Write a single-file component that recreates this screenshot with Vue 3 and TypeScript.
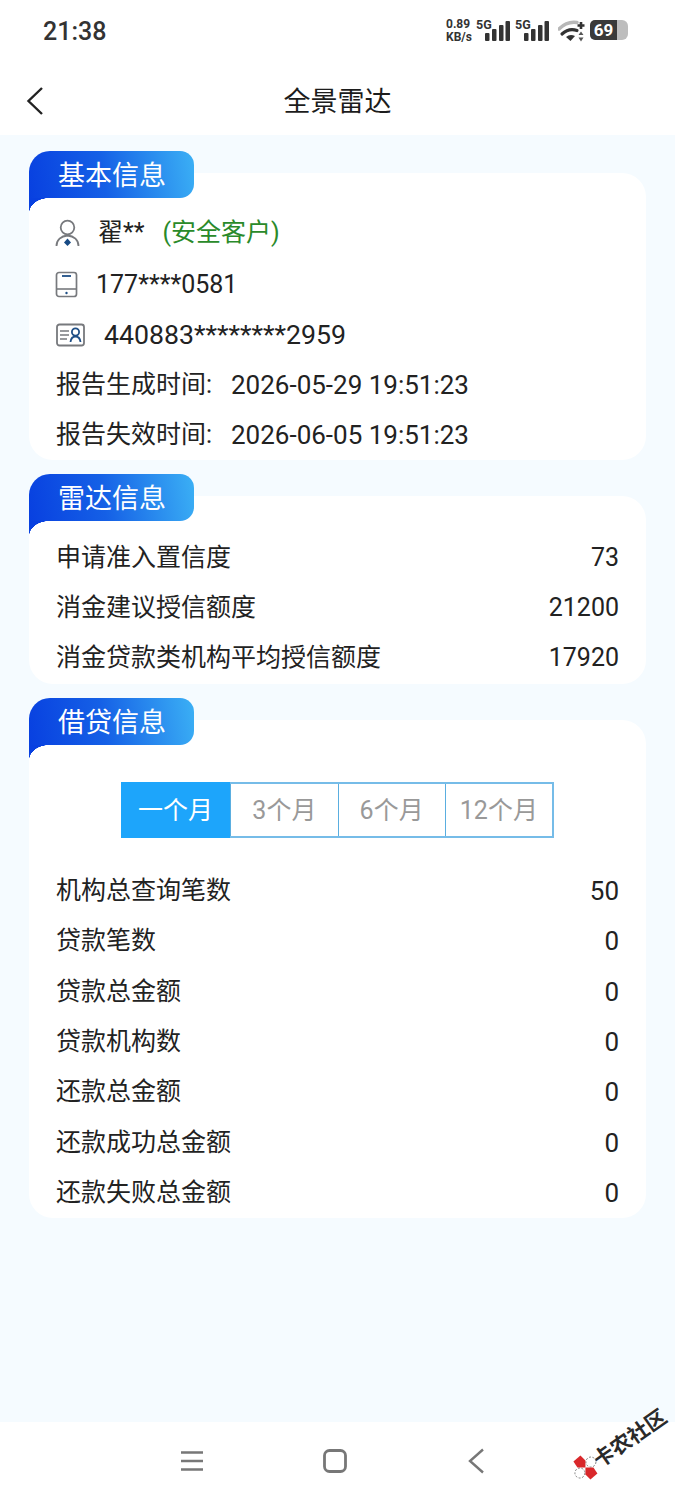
<script setup lang="ts">
import { ref } from "vue";

const radarRows = [
  { label: "申请准入置信度", value: "73" },
  { label: "消金建议授信额度", value: "21200" },
  { label: "消金贷款类机构平均授信额度", value: "17920" },
];

const loanRows = [
  { label: "机构总查询笔数", value: "50" },
  { label: "贷款笔数", value: "0" },
  { label: "贷款总金额", value: "0" },
  { label: "贷款机构数", value: "0" },
  { label: "还款总金额", value: "0" },
  { label: "还款成功总金额", value: "0" },
  { label: "还款失败总金额", value: "0" },
];

const tabs = ["一个月", "3个月", "6个月", "12个月"];
const activeTab = ref(0);
</script>

<template>
  <div class="page">
    <div class="top">
      <div class="status">
        <span class="time">21:38</span>
        <div class="status-icons">
          <span class="speed">0.89<br />KB/s</span>
          <div v-for="n in 2" :key="n" class="signal">
            <span class="five">5G</span>
            <svg width="25" height="20" viewBox="0 0 25 20">
              <rect x="0" y="12" width="4.500" height="8" rx="1" />
              <rect x="7" y="8" width="4.500" height="12" rx="1" />
              <rect x="14" y="4" width="4.500" height="16" rx="1" />
              <rect x="20.500" y="0" width="4.500" height="20" rx="1" />
            </svg>
          </div>
          <svg class="wifi" width="28" height="22" viewBox="0 0 28 22">
            <path d="M1 9 Q9 1 19 2.500" fill="none" stroke="#b8b8b8" stroke-width="3.400" stroke-linecap="round" />
            <path d="M4 14 Q11 7.500 19 10.500" fill="none" stroke="#333" stroke-width="3.200" stroke-linecap="round" />
            <path d="M8 17 Q12 13.500 17 16 L12.500 21 Z" fill="#333" />
            <path d="M23 2 V9 M19.500 5.500 H26.500" stroke="#333" stroke-width="2.600" fill="none" />
            <path d="M23 11.500 L25.500 15 H20.500 Z M23 21.500 L25.500 17.500 H20.500 Z" fill="#555" />
          </svg>
          <div class="battery">
            <span class="battery-fill">69</span>
            <i class="battery-cap"></i>
          </div>
        </div>
      </div>
      <div class="nav">
        <svg class="back" width="20" height="30" viewBox="0 0 20 30">
          <path d="M17 2 L3.500 15 L17 28" fill="none" stroke="#222" stroke-width="2.400" />
        </svg>
        <span class="title">全景雷达</span>
      </div>
    </div>

    <div class="content">
      <section class="card basic">
        <div class="tag">基本信息</div>
        <div class="row first">
          <svg class="ic ic-user" width="26" height="28" viewBox="0 0 26 28">
            <circle cx="12.500" cy="8.500" r="6.800" fill="none" stroke="#77797d" stroke-width="1.800" />
            <path d="M1.500 27 C1.500 21 6 17 12.500 16.500 C19 17 23.500 21 23.500 27" fill="none" stroke="#77797d" stroke-width="1.800" />
            <path d="M12.500 19.500 L16 23.500 L12.500 27 L9 23.500 Z" fill="#174a84" />
          </svg>
          <span class="name">翟**</span>
          <span class="safe">(安全客户)</span>
        </div>
        <div class="row">
          <svg class="ic ic-phone" width="23" height="27" viewBox="0 0 23 27">
            <rect x="1.500" y="1.500" width="20" height="24" rx="2.500" fill="none" stroke="#77797d" stroke-width="1.700" />
            <path d="M1.500 18 H21.500" stroke="#77797d" stroke-width="1.600" />
            <path d="M7 5 H16" stroke="#1f4f86" stroke-width="1.800" />
            <circle cx="11.500" cy="22" r="1.200" fill="#1f4f86" />
          </svg>
          <span class="phone">177****0581</span>
        </div>
        <div class="row">
          <svg class="ic ic-id" width="29" height="24" viewBox="0 0 29 24">
            <rect x="1" y="1.500" width="27" height="21" rx="2.500" fill="none" stroke="#77797d" stroke-width="1.800" />
            <path d="M4 8 H13 M4 12 H13 M4 16 H11" stroke="#77797d" stroke-width="1.600" />
            <circle cx="19.500" cy="9" r="3.600" fill="none" stroke="#1f4f86" stroke-width="1.800" />
            <path d="M14.500 19 C15 15 17 13.500 19.500 13.500 C22 13.500 24 15 24.500 19" fill="none" stroke="#1f4f86" stroke-width="1.800" />
          </svg>
          <span class="idno">440883********2959</span>
        </div>
        <div class="row"><span class="label">报告生成时间:</span><span class="date">2026-05-29 19:51:23</span></div>
        <div class="row"><span class="label">报告失效时间:</span><span class="date">2026-06-05 19:51:23</span></div>
      </section>

      <section class="card radar">
        <div class="tag">雷达信息</div>
        <div v-for="item in radarRows" :key="item.label" class="row between">
          <span>{{ item.label }}</span>
          <span>{{ item.value }}</span>
        </div>
      </section>

      <section class="card loan">
        <div class="tag">借贷信息</div>
        <div class="tabs">
          <div
            v-for="(tab, i) in tabs"
            :key="tab"
            class="tab"
            :class="{ active: i === activeTab }"
            @click="activeTab = i"
          >
            {{ tab }}
          </div>
        </div>
        <div v-for="item in loanRows" :key="item.label" class="row between">
          <span>{{ item.label }}</span>
          <span class="num">{{ item.value }}</span>
        </div>
      </section>
    </div>

    <div class="bottom">
      <svg class="b-menu" width="24" height="22" viewBox="0 0 24 22">
        <path d="M1 2.500 H23 M1 11 H23 M1 19.500 H23" stroke="#777" stroke-width="2.600" />
      </svg>
      <svg class="b-home" width="24" height="24" viewBox="0 0 24 24">
        <rect x="1.500" y="1.500" width="21" height="21" rx="5" fill="none" stroke="#777" stroke-width="2.800" />
      </svg>
      <svg class="b-back" width="16" height="26" viewBox="0 0 16 26">
        <path d="M15 1.500 L2 13 L15 24.500" fill="none" stroke="#777" stroke-width="2.400" />
      </svg>
      <div class="mark">
        <svg class="mark-logo" width="26" height="26" viewBox="0 0 26 26">
          <circle cx="18.500" cy="7.500" r="5" fill="#fff" stroke="#666" stroke-width="0.800" stroke-dasharray="2 1.500" />
          <circle cx="7.500" cy="18.500" r="5" fill="#fff" stroke="#666" stroke-width="0.800" stroke-dasharray="2 1.500" />
          <path d="M1 7 L8 1 L13 6 L13 13 L5 13 Z" fill="#d9282b" />
          <path d="M13 13 L21 13 L25 19 L18 25 L13 20 Z" fill="#d9282b" />
        </svg>
        <span>卡农社区</span>
      </div>
    </div>
  </div>
</template>

<style scoped>
.page {
  width: 675px;
  height: 1500px;
  display: flex;
  flex-direction: column;
  background: #f5fbff;
  color: #222;
  font-family: "Roboto", "Noto Sans CJK SC", sans-serif;
  font-size: 25px;
  overflow: hidden;
}

.top {
  height: 135px;
  background: #fff;
  flex: none;
}

.status {
  height: 62px;
  display: flex;
  align-items: center;
  justify-content: space-between;
  padding: 0 47px 0 43px;
}

.time {
  font-size: 25px;
  font-weight: 500;
  color: #333;
}

.status-icons {
  display: flex;
  align-items: flex-end;
  height: 22px;
  margin-top: -2px;
  color: #333;
}

.speed {
  font-size: 12px;
  line-height: 13px;
  font-weight: 700;
  width: 30px;
  margin-bottom: -3px;
  white-space: nowrap;
}

.signal {
  position: relative;
  width: 34px;
  height: 20px;
  margin-right: 5px;
  display: flex;
  justify-content: flex-end;
  fill: #333;
}

.five {
  position: absolute;
  left: 0;
  top: -2px;
  font-size: 12.500px;
  font-weight: 700;
  line-height: 12px;
}

.wifi {
  margin: 0 4px -1px 4px;
}

.battery {
  display: flex;
  align-items: center;
  width: 38px;
  height: 20px;
  margin-bottom: 1px;
}

.battery-fill {
  width: 27px;
  height: 20px;
  border-radius: 5px 0 0 5px;
  background: #3a3a3a;
  color: #fff;
  font-size: 17px;
  font-weight: 700;
  line-height: 20px;
  text-align: center;
}

.battery-cap {
  width: 11px;
  height: 20px;
  border-radius: 0 6px 6px 0;
  background: #bdbdbd;
}

.nav {
  position: relative;
  height: 73px;
  padding-top: 2px;
  box-sizing: border-box;
  display: flex;
  align-items: center;
  justify-content: center;
}

.back {
  position: absolute;
  left: 25px;
  top: 24px;
}

.title {
  font-size: 27px;
  color: #1c1c1c;
}

.content {
  flex: 1;
  padding: 38px 29px 0;
  display: flex;
  flex-direction: column;
  gap: 36px;
}

.card {
  position: relative;
  background: #fff;
  border-radius: 24px;
  padding: 35px 27px 0 27px;
}

.basic {
  padding-top: 36px;
  padding-bottom: 0;
}

.radar {
  padding-top: 36px;
  padding-bottom: 1px;
}

.tag {
  position: absolute;
  left: 0;
  top: -22px;
  width: 165px;
  height: 47px;
  box-sizing: border-box;
  padding: 4px 0 0 29px;
  border-radius: 21px 14px 14px 0;
  background: linear-gradient(80deg, #0840e0 0%, #1560e6 45%, #3bb0f5 100%);
  color: #fff;
  font-size: 27px;
  line-height: 43px;
}

.tag::after {
  content: "";
  position: absolute;
  left: 0;
  top: 47px;
  width: 20px;
  height: 15px;
  background: radial-gradient(ellipse 20px 15px at 100% 100%, transparent 98%, #0840e0 100%);
}

.row {
  height: 50.300px;
  display: flex;
  align-items: center;
  line-height: 30px;
  white-space: nowrap;
}

.row.first {
  margin: -1px 0 1px;
}

.between {
  justify-content: space-between;
}

.ic {
  flex: none;
}

.ic-user {
  margin: -1px 17px 0 -1px;
}

.ic-phone {
  margin: 0 18px 0 -1px;
}

.ic-id {
  margin: 0 19px 0 0;
}

.phone {
  margin-top: 1px;
}

.idno {
  font-size: 26.700px;
}

.safe {
  margin-left: 18px;
  color: #2a8a2a;
}

.label {
  width: 175px;
}

.date {
  font-size: 26px;
}

.num {
  font-size: 26px;
}

.loan {
  padding-top: 62px;
}

.tabs {
  width: 433px;
  height: 56px;
  margin: 0 auto 27.500px 65px;
  display: grid;
  grid-template-columns: repeat(4, 1fr);
  box-sizing: border-box;
  border: 2px solid #76bce8;
  background: #fff;
}

.tab {
  display: flex;
  align-items: center;
  justify-content: center;
  padding-top: 1px;
  line-height: 30px;
  color: #999;
  border-left: 1px solid #5aaee0;
}

.tab:first-child {
  border-left: 0;
}

.tab.active {
  margin: -2px 0 -2px -2px;
  background: #1da5fb;
  color: #fff;
}

.bottom {
  position: relative;
  height: 78px;
  flex: none;
  background: #fff;
  display: flex;
  align-items: center;
  padding-left: 180px;
  box-sizing: border-box;
}

.b-home {
  margin-left: 119px;
}

.b-back {
  margin-left: 121px;
}

.mark {
  position: absolute;
  left: 565px;
  top: 7px;
  display: flex;
  align-items: center;
  height: 30px;
  transform: rotate(-35deg);
  font-size: 21px;
  font-weight: 700;
  color: #2a2a2a;
  white-space: nowrap;
  text-shadow: 0 0 2px #fff;
}

.mark-logo {
  margin-right: -2px;
  flex: none;
  transform: rotate(35deg);
}
</style>

<style>
html,
body {
  margin: 0;
  background: #fff;
}
</style>
